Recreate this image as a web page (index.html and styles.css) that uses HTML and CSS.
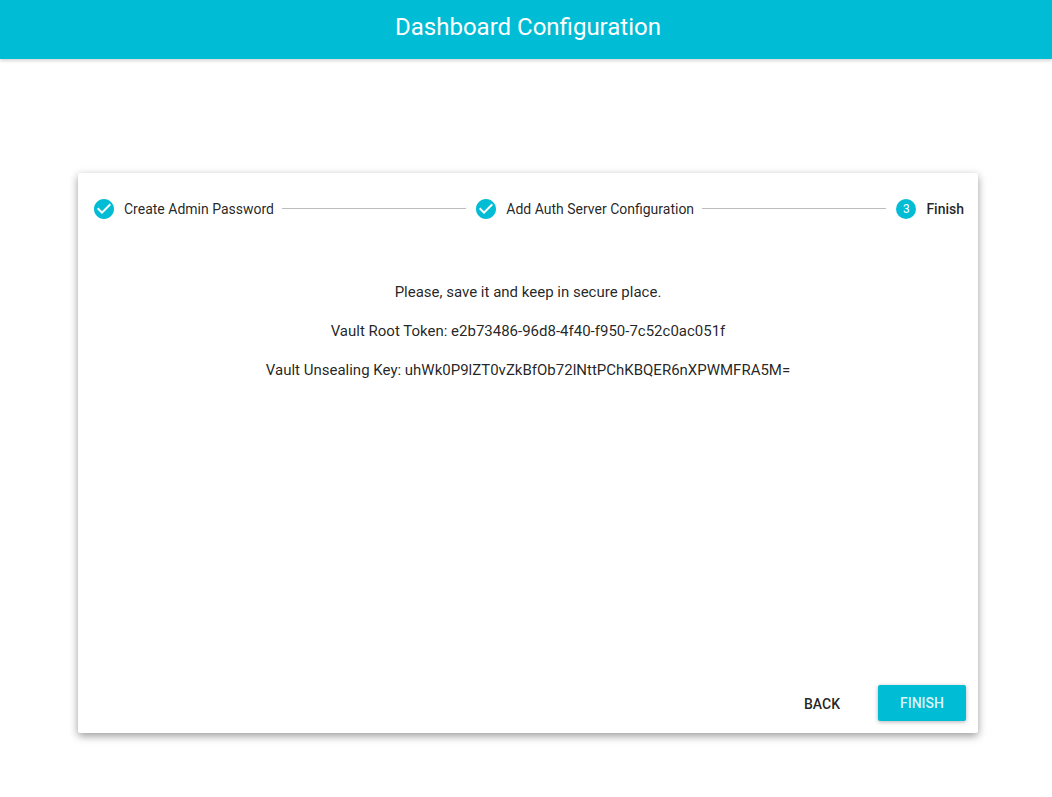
FILE: index.html
```html
<!DOCTYPE html>
<html lang="en">
<head>
<meta charset="utf-8">
<meta name="viewport" content="width=device-width, initial-scale=1">
<title>Dashboard Configuration</title>
<link rel="stylesheet" href="styles.css">
</head>
<body>
<header class="app-bar"><h1 class="app-title">Dashboard Configuration</h1></header>
<main class="page">
  <section class="card">
    <ol class="stepper">
      <li class="step">
        <svg class="step-icon" viewBox="0 0 24 24" aria-hidden="true"><path d="M12 2C6.48 2 2 6.48 2 12s4.48 10 10 10 10-4.48 10-10S17.52 2 12 2zm-2 15l-5-5 1.41-1.41L10 14.17l7.59-7.59L19 8l-9 9z"/></svg>
        <span class="step-label">Create Admin Password</span>
      </li>
      <li class="connector" aria-hidden="true"></li>
      <li class="step">
        <svg class="step-icon" viewBox="0 0 24 24" aria-hidden="true"><path d="M12 2C6.48 2 2 6.48 2 12s4.48 10 10 10 10-4.48 10-10S17.52 2 12 2zm-2 15l-5-5 1.41-1.41L10 14.17l7.59-7.59L19 8l-9 9z"/></svg>
        <span class="step-label">Add Auth Server Configuration</span>
      </li>
      <li class="connector" aria-hidden="true"></li>
      <li class="step step-active" aria-current="step">
        <span class="step-number">3</span>
        <span class="step-label">Finish</span>
      </li>
    </ol>
    <div class="content">
      <p>Please, save it and keep in secure place.</p>
      <p>Vault Root Token: e2b73486-96d8-4f40-f950-7c52c0ac051f</p>
      <p>Vault Unsealing Key: uhWk0P9lZT0vZkBfOb72lNttPChKBQER6nXPWMFRA5M=</p>
    </div>
    <div class="actions">
      <button class="button" type="button">Back</button>
      <button class="button button-primary" type="button">Finish</button>
    </div>
  </section>
</main>
</body>
</html>
```
FILE: styles.css
```css
* { box-sizing: border-box; }
body {
  margin: 0;
  background: #fff;
  color: rgba(0, 0, 0, 0.87);
  font-family: Roboto, sans-serif;
}
.app-bar {
  padding: 11px 20px 16px 24px;
  background: #00bcd4;
  box-shadow: 0 2px 3px rgba(0, 0, 0, 0.16);
  text-align: center;
}
.app-title {
  margin: 0;
  color: #fff;
  font-size: 24px;
  font-weight: 400;
  line-height: 32px;
}
.page { padding: 114px 74px 64px 78px; }
.card {
  display: flex;
  flex-direction: column;
  max-width: 900px;
  min-height: 560px;
  margin: 0 auto;
  border-radius: 2px;
  background: #fff;
  box-shadow: 0 3px 8px rgba(0, 0, 0, 0.4);
}
.stepper {
  display: flex;
  align-items: center;
  height: 72px;
  margin: 0;
  padding: 0;
  list-style: none;
}
.step {
  display: flex;
  align-items: center;
  gap: 8px;
  padding: 0 4px 0 14px;
  font-size: 14px;
  line-height: 20px;
}
.step-active { padding-right: 14px; font-weight: 500; }
.step-icon { width: 24px; height: 24px; fill: #00bcd4; }
.step-number {
  width: 20px;
  height: 20px;
  margin: 0 2px;
  border-radius: 50%;
  background: #00bcd4;
  color: #fff;
  font-size: 12px;
  font-weight: 400;
  text-align: center;
}
.connector { flex: 1; height: 2px; margin: 0 -6px 0 4px; border-top: 1px solid #bdbdbd; }
.content {
  flex: 1;
  padding: 35px 16px;
  font-size: 15px;
  line-height: 24px;
  text-align: center;
}
.content p { margin: 0 0 15px; }
.actions {
  display: flex;
  justify-content: flex-end;
  gap: 12px;
  padding: 12px;
}
.button {
  min-width: 88px;
  height: 36px;
  padding: 2px 16px 0;
  border: 0;
  border-radius: 2px;
  background: transparent;
  color: rgba(0, 0, 0, 0.87);
  font: 500 14px/20px Roboto, sans-serif;
  text-transform: uppercase;
  cursor: pointer;
}
.button-primary {
  padding-top: 0;
  background: #00bcd4;
  box-shadow: 0 1px 4px rgba(0, 0, 0, 0.3);
  color: rgba(255, 255, 255, 0.87);
}
```
